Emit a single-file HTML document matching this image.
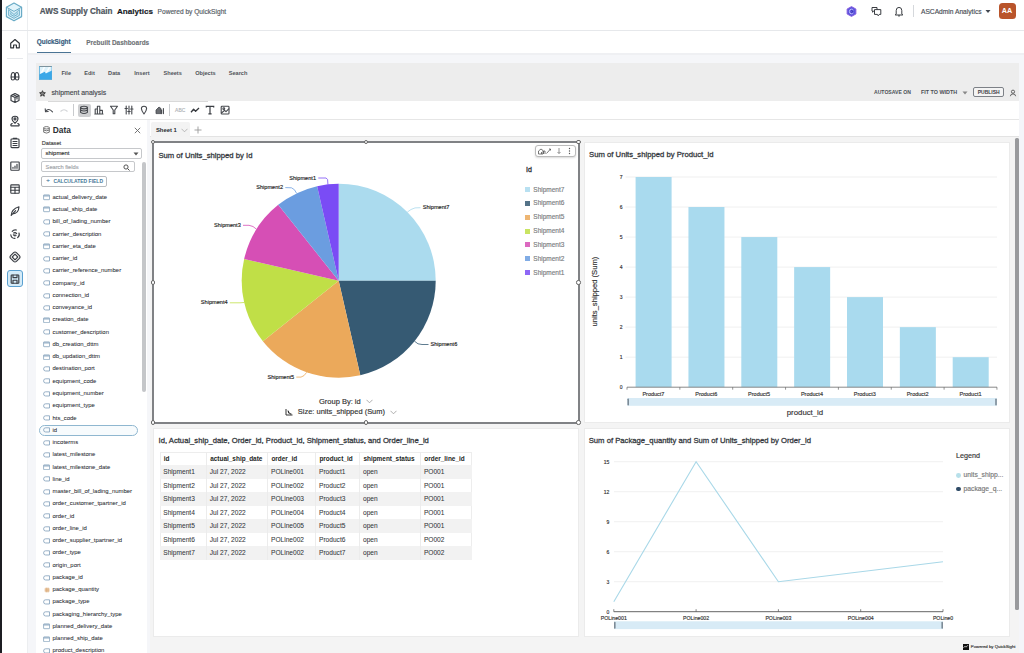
<!DOCTYPE html>
<html><head><meta charset="utf-8"><title>QuickSight</title>
<style>
*{margin:0;padding:0;box-sizing:border-box}
html,body{width:1024px;height:653px;overflow:hidden}
body{position:relative;background:#fff;font-family:"Liberation Sans",sans-serif;color:#16191f}
.a{position:absolute;display:block}
.t{white-space:nowrap}.n{-webkit-text-stroke:0.15px currentColor}
</style></head><body>
<div class="a" style="left:0px;top:0px;width:1024px;height:653px;background:#f5f6f9"></div>
<div class="a" style="left:0px;top:0px;width:2px;height:653px;background:#1c1d22"></div>
<div class="a" style="left:2px;top:0px;width:26px;height:653px;background:#fff;border-right:1px solid #eceef0"></div>
<div class="a" style="left:28px;top:0px;width:996px;height:30px;background:#fff"></div>
<div class="a" style="left:2px;top:30px;width:1022px;height:1px;background:#e6e8eb"></div>
<div class="a" style="left:28px;top:31px;width:996px;height:22px;background:#fff"></div>
<div class="a" style="left:28px;top:53px;width:996px;height:1.6px;background:#eff0f3"></div>
<div class="a t" style="left:39.8px;top:6.61px;font-size:8.15px;line-height:9.78px;font-weight:bold;color:#4e555d;-webkit-text-stroke:0.2px #4e555d">AWS Supply Chain</div>
<div class="a t" style="left:117px;top:6.64px;font-size:8.1px;line-height:9.72px;font-weight:bold;color:#16191f;-webkit-text-stroke:0.15px #16191f">Analytics</div>
<div class="a t n" style="left:157.6px;top:7.84px;font-size:6.6px;line-height:7.92px;font-weight:normal;color:#545b64;">Powered by QuickSight</div>
<svg class="a" style="left:846px;top:5.5px;" width="11" height="11" viewBox="0 0 11 11"><path d="M5.5 0.6 L9.9 3 L9.9 8 L5.5 10.4 L1.1 8 L1.1 3 Z" fill="#5b55dc" stroke="#8a5ee0" stroke-width="0.9" stroke-linejoin="round"/><path d="M7.3 4 Q6.6 3.2 5.5 3.2 Q3.4 3.2 3.4 5.5 Q3.4 7.8 5.5 7.8 Q6.6 7.8 7.3 7" fill="none" stroke="#c9c6ff" stroke-width="0.9"/><path d="M5.5 4.2 L6.5 5.5 L5.5 6.8" fill="none" stroke="#2e2a9a" stroke-width="0.8"/></svg>
<svg class="a" style="left:871px;top:6px;" width="11" height="11" viewBox="0 0 11 11"><path d="M1 1.5 L6 1.5 L6 5 L2.8 5 L1.6 6.2 L1.6 5 L1 5 Z" fill="none" stroke="#2f3338" stroke-width="0.95" stroke-linejoin="round"/><path d="M3.5 3.6 L9.8 3.6 L9.8 8.4 L8.2 8.4 L7.2 9.8 L6.4 8.4 L3.5 8.4 Z" fill="#fff" stroke="#2f3338" stroke-width="0.95" stroke-linejoin="round"/></svg>
<svg class="a" style="left:894px;top:5.5px;" width="10" height="11" viewBox="0 0 10 11"><path d="M2.2 8 L2.2 4.6 Q2.2 1.4 5 1.4 Q7.8 1.4 7.8 4.6 L7.8 8 L8.8 9 L1.2 9 Z" fill="none" stroke="#2f3338" stroke-width="0.95" stroke-linejoin="round"/><path d="M4 9.6 Q5 10.8 6 9.6" fill="none" stroke="#2f3338" stroke-width="0.9"/></svg>
<div class="a" style="left:912.5px;top:5px;width:1px;height:12px;background:#d5d8dc"></div>
<div class="a t n" style="left:921px;top:7.71px;font-size:6.65px;line-height:7.98px;font-weight:normal;color:#4a4f56;">ASCAdmin Analytics</div>
<svg class="a" style="left:985px;top:9px;" width="6" height="5" viewBox="0 0 6 5"><path d="M0.5 1 L5.5 1 L3 4 Z" fill="#414750"/></svg>
<div class="a" style="left:998.5px;top:2.8px;width:17px;height:16.5px;background:#b9542b;border-radius:3.5px"></div>
<div class="a t" style="left:998.5px;top:7.48px;font-size:7.2px;line-height:8.64px;font-weight:bold;color:#fff;width:17px;text-align:center">AA</div>
<svg class="a" style="left:5px;top:2px;" width="18" height="20" viewBox="0 0 18 20"><path d="M9 1 L16.6 5.2 L16.6 14.6 L9 18.8 L1.4 14.6 L1.4 5.2 Z" fill="#e2f4fb" stroke="#69abc6" stroke-width="1.2" stroke-linejoin="round"/><path d="M1.4 5.2 L9 9.4 L16.6 5.2" fill="none" stroke="#69abc6" stroke-width="1"/><path d="M3.6 7.4 L3.6 13.4 L9 16.4 L14.4 13.4 L14.4 7.4 L9 12.6 Z M5.8 10.4 L5.8 12.6 L9 14.3 L12.2 12.6 L12.2 10.4" fill="#cdeaf6" stroke="#69abc6" stroke-width="0.9" stroke-linejoin="round"/></svg>
<svg class="a" style="left:9px;top:38px;" width="12" height="11" viewBox="0 0 12 11"><path d="M1.7 5.3 L6 1.5 L10.3 5.3 L10.3 9.8 L7.4 9.8 L7.4 7 L4.6 7 L4.6 9.8 L1.7 9.8 Z" fill="none" stroke="#2f3338" stroke-width="1.15" stroke-linejoin="round"/></svg>
<div class="a" style="left:7px;top:57.5px;width:16px;height:1px;background:#e6e8eb"></div>
<svg class="a" style="left:9.0px;top:69.8px;" width="12" height="12" viewBox="0 0 12 12"><path d="M2.2 8.2 Q1.8 3 4 2.5 Q5.6 2.3 5.6 5 L5.6 8.2 Q5.6 10 3.9 10 Q2.2 10 2.2 8.2 Z M9.8 8.2 Q10.2 3 8 2.5 Q6.4 2.3 6.4 5 L6.4 8.2 Q6.4 10 8.1 10 Q9.8 10 9.8 8.2 Z" fill="none" stroke="#3a3e44" stroke-width="1.15" stroke-linejoin="round" stroke-linecap="round"/><path d="M2.2 7 L5.6 7 M6.4 7 L9.8 7" fill="none" stroke="#3a3e44" stroke-width="1.15" stroke-linejoin="round" stroke-linecap="round"/></svg>
<svg class="a" style="left:9.0px;top:92.1px;" width="12" height="12" viewBox="0 0 12 12"><path d="M6 1.6 L10 3.6 L10 8.4 L6 10.4 L2 8.4 L2 3.6 Z M2 3.6 L6 5.6 L10 3.6 M6 5.6 L6 10.4" fill="none" stroke="#3a3e44" stroke-width="1.15" stroke-linejoin="round" stroke-linecap="round"/><path d="M4 2.6 L8 4.6 L8 7" fill="none" stroke="#3a3e44" stroke-width="1.15" stroke-linejoin="round" stroke-linecap="round"/></svg>
<svg class="a" style="left:9.0px;top:114.5px;" width="12" height="12" viewBox="0 0 12 12"><path d="M6 8.2 Q3 5.6 3 3.9 Q3 1.2 6 1.2 Q9 1.2 9 3.9 Q9 5.6 6 8.2 Z" fill="none" stroke="#3a3e44" stroke-width="1.15" stroke-linejoin="round" stroke-linecap="round"/><circle cx="6" cy="3.9" r="1" fill="none" stroke="#3a3e44" stroke-width="1.15" stroke-linejoin="round" stroke-linecap="round"/><path d="M3.2 8.6 Q1.2 9.6 2 10.8 L10 10.8 Q10.8 9.6 8.8 8.6" fill="none" stroke="#3a3e44" stroke-width="1.15" stroke-linejoin="round" stroke-linecap="round"/></svg>
<svg class="a" style="left:9.0px;top:137.3px;" width="12" height="12" viewBox="0 0 12 12"><rect x="2" y="2" width="8" height="8.6" rx="0.8" fill="none" stroke="#3a3e44" stroke-width="1.15" stroke-linejoin="round" stroke-linecap="round"/><path d="M4.2 1.4 L7.8 1.4 M4 4.5 L8 4.5 M4 6.5 L8 6.5 M4 8.5 L8 8.5" fill="none" stroke="#3a3e44" stroke-width="1.15" stroke-linejoin="round" stroke-linecap="round"/></svg>
<svg class="a" style="left:9.0px;top:160px;" width="12" height="12" viewBox="0 0 12 12"><rect x="1.8" y="2" width="8.4" height="8.2" rx="0.6" fill="none" stroke="#3a3e44" stroke-width="1.15" stroke-linejoin="round" stroke-linecap="round"/><path d="M4 8.3 L4 7.2 M6 8.3 L6 6 M8 8.3 L8 4.3" fill="none" stroke="#3a3e44" stroke-width="1.15" stroke-linejoin="round" stroke-linecap="round"/></svg>
<svg class="a" style="left:9.0px;top:182.5px;" width="12" height="12" viewBox="0 0 12 12"><rect x="1.8" y="1.8" width="8.4" height="8.4" rx="0.6" fill="none" stroke="#3a3e44" stroke-width="1.15" stroke-linejoin="round" stroke-linecap="round"/><path d="M1.8 4.2 L10.2 4.2 M6 4.2 L6 10.2 M1.8 7.2 L10.2 7.2" fill="none" stroke="#3a3e44" stroke-width="1.15" stroke-linejoin="round" stroke-linecap="round"/></svg>
<svg class="a" style="left:9.0px;top:204.6px;" width="12" height="12" viewBox="0 0 12 12"><path d="M2.2 10.4 Q2.4 4.2 10 1.8 Q9.6 8.6 3.6 9 M2.2 10.4 L6.6 5.6" fill="none" stroke="#3a3e44" stroke-width="1.15" stroke-linejoin="round" stroke-linecap="round"/></svg>
<svg class="a" style="left:9.0px;top:227.8px;" width="12" height="12" viewBox="0 0 12 12"><path d="M3.2 3.4 A4 4 0 0 1 7.4 2 M10 5 A4 4 0 0 1 8.6 9.6 M6 10.4 A4 4 0 0 1 1.8 6.8" fill="none" stroke="#3a3e44" stroke-width="1.15" stroke-linejoin="round" stroke-linecap="round"/><path d="M4.6 5 A2 2 0 0 1 7.6 5.6 M7 7.6 A2 2 0 0 1 4.4 6.8" fill="none" stroke="#3a3e44" stroke-width="1.15" stroke-linejoin="round" stroke-linecap="round"/><circle cx="6" cy="6.2" r="0.6" fill="#3a3e44"/></svg>
<svg class="a" style="left:9.0px;top:250.5px;" width="12" height="12" viewBox="0 0 12 12"><path d="M4.6 1.6 Q6 0.4 7.4 1.6 L10.4 4.6 Q11.6 6 10.4 7.4 L7.4 10.4 Q6 11.6 4.6 10.4 L1.6 7.4 Q0.4 6 1.6 4.6 Z" fill="none" stroke="#3a3e44" stroke-width="1.15" stroke-linejoin="round" stroke-linecap="round"/><path d="M6 3.2 L8.8 6 L6 8.8 L3.2 6 Z" fill="none" stroke="#3a3e44" stroke-width="1.15" stroke-linejoin="round" stroke-linecap="round"/></svg>
<div class="a" style="left:7px;top:270.3px;width:16px;height:17px;background:#d4ebf8;border:1.2px solid #5aa0d0;border-radius:3px"></div>
<svg class="a" style="left:9.0px;top:273px;" width="12" height="12" viewBox="0 0 12 12"><rect x="2.2" y="2" width="7.6" height="8.2" rx="0.5" fill="none" stroke="#3a3e44" stroke-width="1.15" stroke-linejoin="round" stroke-linecap="round"/><path d="M4 2 L4 4.6 L8 4.6 L8 2 M4 10.2 L4 7.2 L8 7.2 L8 10.2" fill="none" stroke="#3a3e44" stroke-width="1.15" stroke-linejoin="round" stroke-linecap="round"/></svg>
<div class="a t" style="left:36.7px;top:38.33px;font-size:6.45px;line-height:7.74px;font-weight:bold;color:#345a7c;-webkit-text-stroke:0.15px #345a7c">QuickSight</div>
<div class="a" style="left:36.5px;top:51.6px;width:34.5px;height:1.4px;background:#4a7495"></div>
<div class="a t" style="left:86.2px;top:38.53px;font-size:6.44px;line-height:7.73px;font-weight:bold;color:#6e7175;-webkit-text-stroke:0.12px #6e7175">Prebuilt Dashboards</div>
<div class="a" style="left:36px;top:63px;width:983px;height:38px;background:#ededed"></div>
<svg class="a" style="left:38.5px;top:66px;" width="13.4" height="13.8" viewBox="0 0 13.4 13.8"><rect x="0" y="0" width="13.4" height="13.8" fill="#dcf2fb"/><path d="M1 8 L4.6 1 L6.4 1 L2.6 8.4 Z M6.6 6.8 L9.8 1 L11.6 1 L8.2 6.6 Z" fill="#fafdff"/><path d="M0 13.8 L0 8.4 L5.8 5.8 L6.8 7.6 L13.4 4.4 L13.4 13.8 Z" fill="#3aa8e8"/><rect x="0.4" y="0.4" width="12.6" height="13" fill="none" stroke="#58addc" stroke-width="0.8"/><path d="M0.8 0.5 L12.6 0.5" stroke="#7f8f96" stroke-width="0.9"/></svg>
<div class="a t" style="left:61.4px;top:69.84px;font-size:5.6px;line-height:6.72px;font-weight:bold;color:#505459;">File</div>
<div class="a t" style="left:84.2px;top:69.84px;font-size:5.6px;line-height:6.72px;font-weight:bold;color:#505459;">Edit</div>
<div class="a t" style="left:108.1px;top:69.84px;font-size:5.6px;line-height:6.72px;font-weight:bold;color:#505459;">Data</div>
<div class="a t" style="left:134.3px;top:69.84px;font-size:5.6px;line-height:6.72px;font-weight:bold;color:#505459;">Insert</div>
<div class="a t" style="left:163.5px;top:69.84px;font-size:5.6px;line-height:6.72px;font-weight:bold;color:#505459;">Sheets</div>
<div class="a t" style="left:195.2px;top:69.84px;font-size:5.6px;line-height:6.72px;font-weight:bold;color:#505459;">Objects</div>
<div class="a t" style="left:228.7px;top:69.84px;font-size:5.6px;line-height:6.72px;font-weight:bold;color:#505459;">Search</div>
<svg class="a" style="left:39.3px;top:89.5px;" width="7" height="7" viewBox="0 0 7 7"><path d="M3.5 0.7 L4.3 2.6 L6.4 2.8 L4.8 4.1 L5.3 6.2 L3.5 5.1 L1.7 6.2 L2.2 4.1 L0.6 2.8 L2.7 2.6 Z" fill="#888" stroke="#333" stroke-width="0.9" stroke-linejoin="round"/></svg>
<div class="a t n" style="left:51.4px;top:89.06px;font-size:6.9px;line-height:8.28px;font-weight:normal;color:#45494e;">shipment analysis</div>
<div class="a t" style="left:874px;top:88.94px;font-size:5.1px;line-height:6.12px;font-weight:bold;color:#4a4f55;">AUTOSAVE ON</div>
<div class="a t" style="left:921px;top:88.76px;font-size:5.4px;line-height:6.48px;font-weight:bold;color:#4a4f55;">FIT TO WIDTH</div>
<svg class="a" style="left:961.5px;top:90.5px;" width="6" height="4" viewBox="0 0 6 4"><path d="M0.5 0.5 L5.5 0.5 L3 3.5 Z" fill="#888"/></svg>
<div class="a" style="left:973.4px;top:87px;width:30.3px;height:10.4px;border:1px solid #7d8187;border-radius:2px;background:#f4f4f4"></div>
<div class="a t" style="left:977.7px;top:89.20px;font-size:5.0px;line-height:6.0px;font-weight:bold;color:#3c4046;">PUBLISH</div>
<svg class="a" style="left:1009px;top:88.5px;" width="8" height="8" viewBox="0 0 8 8"><circle cx="4" cy="2.7" r="1.6" fill="none" stroke="#555" stroke-width="0.9"/><path d="M1.4 7.2 Q1.4 4.9 4 4.9 Q6.6 4.9 6.6 7.2" fill="none" stroke="#555" stroke-width="0.9"/></svg>
<div class="a" style="left:36px;top:101px;width:983px;height:18.5px;background:#fff;border-bottom:1px solid #e6e6e6"></div>
<div class="a" style="left:48px;top:100.5px;width:160px;height:1px;background:#d9d9d9"></div>
<svg class="a" style="left:44px;top:105px;" width="10" height="10" viewBox="0 0 10 10"><path d="M1.5 6.5 Q4.5 2.5 8.5 6.8" fill="none" stroke="#45484d" stroke-width="1.1" stroke-linejoin="round" stroke-linecap="round"/><path d="M1.2 3.8 L1.5 6.8 L4.2 6.5" fill="none" stroke="#45484d" stroke-width="1.1" stroke-linejoin="round" stroke-linecap="round"/></svg>
<svg class="a" style="left:59px;top:105px;" width="10" height="10" viewBox="0 0 10 10"><path d="M1.5 6.5 Q5 3 8.5 6.5" fill="none" stroke="#d3d5d8" stroke-width="1.1"/></svg>
<div class="a" style="left:73.3px;top:104.4px;width:1px;height:11.2px;background:#c9cbce"></div>
<div class="a" style="left:77.6px;top:103.9px;width:13.2px;height:12.7px;background:#cfd0d2;border-radius:2px"></div>
<svg class="a" style="left:79px;top:105px;" width="10" height="10" viewBox="0 0 10 10"><ellipse cx="5" cy="2.6" rx="3.4" ry="1.3" fill="none" stroke="#45484d" stroke-width="1.1" stroke-linejoin="round" stroke-linecap="round"/><path d="M1.6 2.6 L1.6 7.4 Q5 9.6 8.4 7.4 L8.4 2.6 M1.6 5 Q5 7 8.4 5" fill="none" stroke="#45484d" stroke-width="1.1" stroke-linejoin="round" stroke-linecap="round"/></svg>
<svg class="a" style="left:94px;top:105px;" width="10" height="10" viewBox="0 0 10 10"><path d="M1.2 9 L1.2 4 L3.4 4 L3.4 9 M3.4 9 L3.4 1.2 L5.8 1.2 L5.8 9 M5.8 9 L5.8 5.4 L8.4 5.4 L8.4 9 Z M0.8 9 L9 9" fill="none" stroke="#45484d" stroke-width="1.1" stroke-linejoin="round" stroke-linecap="round"/></svg>
<svg class="a" style="left:109.2px;top:105px;" width="10" height="10" viewBox="0 0 10 10"><path d="M1.5 1.3 L8.5 1.3 L5.8 5 L5.8 8.8 L4.2 8.8 L4.2 5 Z" fill="none" stroke="#45484d" stroke-width="1.1" stroke-linejoin="round" stroke-linecap="round"/></svg>
<svg class="a" style="left:124px;top:105px;" width="10" height="10" viewBox="0 0 10 10"><path d="M2.2 1 L2.2 9 M5 1 L5 9 M7.8 1 L7.8 9" fill="none" stroke="#45484d" stroke-width="1.1" stroke-linejoin="round" stroke-linecap="round"/><path d="M1 3.5 L3.4 3.5 M3.8 6.5 L6.2 6.5 M6.6 4 L9 4" fill="none" stroke="#45484d" stroke-width="1.1" stroke-linejoin="round" stroke-linecap="round"/></svg>
<svg class="a" style="left:139.2px;top:105px;" width="10" height="10" viewBox="0 0 10 10"><path d="M5 9 Q2.4 5.6 2.4 3.6 Q2.4 1.2 5 1.2 Q7.6 1.2 7.6 3.6 Q7.6 5.6 5 9 Z" fill="none" stroke="#45484d" stroke-width="1.1" stroke-linejoin="round" stroke-linecap="round"/></svg>
<svg class="a" style="left:155px;top:105px;" width="10" height="10" viewBox="0 0 10 10"><path d="M1 8.6 L1 5 L4 2 L6 3.6 L6 8.6 Z" fill="#6a6d72" stroke="#45484d" stroke-width="0.8"/><path d="M6.6 8.6 L6.6 5 M8.4 8.6 L8.4 3.6" fill="none" stroke="#45484d" stroke-width="1.1" stroke-linejoin="round" stroke-linecap="round"/></svg>
<div class="a" style="left:169.4px;top:104.4px;width:1px;height:11.2px;background:#c9cbce"></div>
<div class="a t n" style="left:175px;top:107.20px;font-size:5px;line-height:6.0px;font-weight:normal;color:#b0b3b7;letter-spacing:0.1px">ABC</div>
<svg class="a" style="left:190px;top:105px;" width="10" height="10" viewBox="0 0 10 10"><path d="M1 7.2 L3.6 4.2 L5.6 6.2 L9 3" fill="none" stroke="#35383d" stroke-width="1.3" stroke-linejoin="round"/></svg>
<svg class="a" style="left:205.2px;top:105px;" width="10" height="10" viewBox="0 0 10 10"><path d="M1.3 2.6 L1.3 1.3 L8.7 1.3 L8.7 2.6 M5 1.3 L5 8.8 M3.4 8.8 L6.6 8.8" fill="none" stroke="#3b3e43" stroke-width="1.2"/></svg>
<svg class="a" style="left:220.2px;top:105px;" width="10" height="10" viewBox="0 0 10 10"><rect x="1.2" y="1.2" width="7.8" height="7.8" rx="0.8" fill="none" stroke="#45484d" stroke-width="1.1" stroke-linejoin="round" stroke-linecap="round"/><circle cx="3.8" cy="3.8" r="0.9" fill="none" stroke="#45484d" stroke-width="1.1" stroke-linejoin="round" stroke-linecap="round"/><path d="M1.5 8 L4.6 5.3 L6 6.6 L8.8 3.9" fill="none" stroke="#45484d" stroke-width="1.1" stroke-linejoin="round" stroke-linecap="round"/></svg>
<div class="a" style="left:36px;top:120px;width:111px;height:533px;background:#fff"></div>
<svg class="a" style="left:42.5px;top:126px;" width="7" height="8" viewBox="0 0 7 8"><ellipse cx="3.5" cy="1.8" rx="2.8" ry="1.2" fill="none" stroke="#555" stroke-width="0.8"/><path d="M0.7 1.8 L0.7 6.2 Q3.5 8 6.3 6.2 L6.3 1.8 M0.7 4 Q3.5 5.6 6.3 4" fill="none" stroke="#555" stroke-width="0.8"/></svg>
<div class="a t" style="left:52.7px;top:124.76px;font-size:8.4px;line-height:10.08px;font-weight:bold;color:#2b2f34;">Data</div>
<svg class="a" style="left:133.5px;top:126.5px;" width="7" height="7" viewBox="0 0 7 7"><path d="M0.8 0.8 L6.2 6.2 M6.2 0.8 L0.8 6.2" stroke="#666" stroke-width="0.9"/></svg>
<div class="a t n" style="left:41.7px;top:139.61px;font-size:5.65px;line-height:6.78px;font-weight:normal;color:#444;">Dataset</div>
<div class="a" style="left:41px;top:147.5px;width:100.6px;height:11.1px;border:1px solid #c6c8cb;border-radius:2px;background:#fff"></div>
<div class="a t n" style="left:45.6px;top:149.96px;font-size:5.9px;line-height:7.08px;font-weight:normal;color:#333;">shipment</div>
<svg class="a" style="left:132.5px;top:151.5px;" width="6" height="4" viewBox="0 0 6 4"><path d="M0.5 0.5 L5.5 0.5 L3 3.5 Z" fill="#555"/></svg>
<div class="a" style="left:41px;top:161.2px;width:93.7px;height:11.1px;border:1px solid #c6c8cb;border-radius:2px;background:#fff"></div>
<div class="a t n" style="left:45.6px;top:164.18px;font-size:5.7px;line-height:6.84px;font-weight:normal;color:#a2a5a9;">Search fields</div>
<svg class="a" style="left:123px;top:163.5px;" width="7" height="7" viewBox="0 0 7 7"><circle cx="3" cy="3" r="2.1" fill="none" stroke="#444" stroke-width="0.9"/><path d="M4.6 4.6 L6.5 6.5" stroke="#444" stroke-width="1"/></svg>
<div class="a" style="left:141.9px;top:161.8px;width:3.9px;height:230px;background:#c4c6c9;border-radius:2px"></div>
<div class="a" style="left:41px;top:175.5px;width:66px;height:11.1px;border:1px solid #b9bcc0;border-radius:2px;background:#fff"></div>
<div class="a t n" style="left:46.3px;top:177.40px;font-size:6px;line-height:7.2px;font-weight:normal;color:#5b8aa8;">+</div>
<div class="a t" style="left:53.4px;top:178.10px;font-size:5.0px;line-height:6.0px;font-weight:bold;color:#477a99;">CALCULATED FIELD</div>
<svg class="a" style="left:43px;top:194.20000000000002px;" width="7.2" height="6.4" viewBox="0 0 7.2 6.4"><rect x="0.6" y="0.9" width="6" height="4.8" rx="0.4" fill="none" stroke="#86a3bd" stroke-width="0.8"/><path d="M0.6 1.9 L6.6 1.9" stroke="#86a3bd" stroke-width="1.1"/></svg>
<div class="a t n" style="left:52.5px;top:193.83px;font-size:5.95px;line-height:7.14px;font-weight:normal;color:#2a2e33;-webkit-text-stroke:0.05px #2a2e33">actual_delivery_date</div>
<svg class="a" style="left:43px;top:206.46px;" width="7.2" height="6.4" viewBox="0 0 7.2 6.4"><rect x="0.6" y="0.9" width="6" height="4.8" rx="0.4" fill="none" stroke="#86a3bd" stroke-width="0.8"/><path d="M0.6 1.9 L6.6 1.9" stroke="#86a3bd" stroke-width="1.1"/></svg>
<div class="a t n" style="left:52.5px;top:206.09px;font-size:5.95px;line-height:7.14px;font-weight:normal;color:#2a2e33;-webkit-text-stroke:0.05px #2a2e33">actual_ship_date</div>
<svg class="a" style="left:43px;top:219.02px;" width="7.2" height="6" viewBox="0 0 7.2 6"><path d="M2.6 0.8 L6.5 0.8 L6.5 5 L2.6 5 Q0.6 5 0.6 2.9 Q0.6 0.8 2.6 0.8 Z" fill="none" stroke="#86a3bd" stroke-width="0.85"/></svg>
<div class="a t n" style="left:52.5px;top:218.35px;font-size:5.95px;line-height:7.14px;font-weight:normal;color:#2a2e33;-webkit-text-stroke:0.05px #2a2e33">bill_of_lading_number</div>
<svg class="a" style="left:43px;top:231.28px;" width="7.2" height="6" viewBox="0 0 7.2 6"><path d="M2.6 0.8 L6.5 0.8 L6.5 5 L2.6 5 Q0.6 5 0.6 2.9 Q0.6 0.8 2.6 0.8 Z" fill="none" stroke="#86a3bd" stroke-width="0.85"/></svg>
<div class="a t n" style="left:52.5px;top:230.61px;font-size:5.95px;line-height:7.14px;font-weight:normal;color:#2a2e33;-webkit-text-stroke:0.05px #2a2e33">carrier_description</div>
<svg class="a" style="left:43px;top:243.24px;" width="7.2" height="6.4" viewBox="0 0 7.2 6.4"><rect x="0.6" y="0.9" width="6" height="4.8" rx="0.4" fill="none" stroke="#86a3bd" stroke-width="0.8"/><path d="M0.6 1.9 L6.6 1.9" stroke="#86a3bd" stroke-width="1.1"/></svg>
<div class="a t n" style="left:52.5px;top:242.87px;font-size:5.95px;line-height:7.14px;font-weight:normal;color:#2a2e33;-webkit-text-stroke:0.05px #2a2e33">carrier_eta_date</div>
<svg class="a" style="left:43px;top:255.79999999999998px;" width="7.2" height="6" viewBox="0 0 7.2 6"><path d="M2.6 0.8 L6.5 0.8 L6.5 5 L2.6 5 Q0.6 5 0.6 2.9 Q0.6 0.8 2.6 0.8 Z" fill="none" stroke="#86a3bd" stroke-width="0.85"/></svg>
<div class="a t n" style="left:52.5px;top:255.13px;font-size:5.95px;line-height:7.14px;font-weight:normal;color:#2a2e33;-webkit-text-stroke:0.05px #2a2e33">carrier_id</div>
<svg class="a" style="left:43px;top:268.06000000000006px;" width="7.2" height="6" viewBox="0 0 7.2 6"><path d="M2.6 0.8 L6.5 0.8 L6.5 5 L2.6 5 Q0.6 5 0.6 2.9 Q0.6 0.8 2.6 0.8 Z" fill="none" stroke="#86a3bd" stroke-width="0.85"/></svg>
<div class="a t n" style="left:52.5px;top:267.39px;font-size:5.95px;line-height:7.14px;font-weight:normal;color:#2a2e33;-webkit-text-stroke:0.05px #2a2e33">carrier_reference_number</div>
<svg class="a" style="left:43px;top:280.32000000000005px;" width="7.2" height="6" viewBox="0 0 7.2 6"><path d="M2.6 0.8 L6.5 0.8 L6.5 5 L2.6 5 Q0.6 5 0.6 2.9 Q0.6 0.8 2.6 0.8 Z" fill="none" stroke="#86a3bd" stroke-width="0.85"/></svg>
<div class="a t n" style="left:52.5px;top:279.65px;font-size:5.95px;line-height:7.14px;font-weight:normal;color:#2a2e33;-webkit-text-stroke:0.05px #2a2e33">company_id</div>
<svg class="a" style="left:43px;top:292.58000000000004px;" width="7.2" height="6" viewBox="0 0 7.2 6"><path d="M2.6 0.8 L6.5 0.8 L6.5 5 L2.6 5 Q0.6 5 0.6 2.9 Q0.6 0.8 2.6 0.8 Z" fill="none" stroke="#86a3bd" stroke-width="0.85"/></svg>
<div class="a t n" style="left:52.5px;top:291.91px;font-size:5.95px;line-height:7.14px;font-weight:normal;color:#2a2e33;-webkit-text-stroke:0.05px #2a2e33">connection_id</div>
<svg class="a" style="left:43px;top:304.84000000000003px;" width="7.2" height="6" viewBox="0 0 7.2 6"><path d="M2.6 0.8 L6.5 0.8 L6.5 5 L2.6 5 Q0.6 5 0.6 2.9 Q0.6 0.8 2.6 0.8 Z" fill="none" stroke="#86a3bd" stroke-width="0.85"/></svg>
<div class="a t n" style="left:52.5px;top:304.17px;font-size:5.95px;line-height:7.14px;font-weight:normal;color:#2a2e33;-webkit-text-stroke:0.05px #2a2e33">conveyance_id</div>
<svg class="a" style="left:43px;top:316.8px;" width="7.2" height="6.4" viewBox="0 0 7.2 6.4"><rect x="0.6" y="0.9" width="6" height="4.8" rx="0.4" fill="none" stroke="#86a3bd" stroke-width="0.8"/><path d="M0.6 1.9 L6.6 1.9" stroke="#86a3bd" stroke-width="1.1"/></svg>
<div class="a t n" style="left:52.5px;top:316.43px;font-size:5.95px;line-height:7.14px;font-weight:normal;color:#2a2e33;-webkit-text-stroke:0.05px #2a2e33">creation_date</div>
<svg class="a" style="left:43px;top:329.36px;" width="7.2" height="6" viewBox="0 0 7.2 6"><path d="M2.6 0.8 L6.5 0.8 L6.5 5 L2.6 5 Q0.6 5 0.6 2.9 Q0.6 0.8 2.6 0.8 Z" fill="none" stroke="#86a3bd" stroke-width="0.85"/></svg>
<div class="a t n" style="left:52.5px;top:328.69px;font-size:5.95px;line-height:7.14px;font-weight:normal;color:#2a2e33;-webkit-text-stroke:0.05px #2a2e33">customer_description</div>
<svg class="a" style="left:43px;top:341.32px;" width="7.2" height="6.4" viewBox="0 0 7.2 6.4"><rect x="0.6" y="0.9" width="6" height="4.8" rx="0.4" fill="none" stroke="#86a3bd" stroke-width="0.8"/><path d="M0.6 1.9 L6.6 1.9" stroke="#86a3bd" stroke-width="1.1"/></svg>
<div class="a t n" style="left:52.5px;top:340.95px;font-size:5.95px;line-height:7.14px;font-weight:normal;color:#2a2e33;-webkit-text-stroke:0.05px #2a2e33">db_creation_dttm</div>
<svg class="a" style="left:43px;top:353.58px;" width="7.2" height="6.4" viewBox="0 0 7.2 6.4"><rect x="0.6" y="0.9" width="6" height="4.8" rx="0.4" fill="none" stroke="#86a3bd" stroke-width="0.8"/><path d="M0.6 1.9 L6.6 1.9" stroke="#86a3bd" stroke-width="1.1"/></svg>
<div class="a t n" style="left:52.5px;top:353.21px;font-size:5.95px;line-height:7.14px;font-weight:normal;color:#2a2e33;-webkit-text-stroke:0.05px #2a2e33">db_updation_dttm</div>
<svg class="a" style="left:43px;top:366.14px;" width="7.2" height="6" viewBox="0 0 7.2 6"><path d="M2.6 0.8 L6.5 0.8 L6.5 5 L2.6 5 Q0.6 5 0.6 2.9 Q0.6 0.8 2.6 0.8 Z" fill="none" stroke="#86a3bd" stroke-width="0.85"/></svg>
<div class="a t n" style="left:52.5px;top:365.47px;font-size:5.95px;line-height:7.14px;font-weight:normal;color:#2a2e33;-webkit-text-stroke:0.05px #2a2e33">destination_port</div>
<svg class="a" style="left:43px;top:378.40000000000003px;" width="7.2" height="6" viewBox="0 0 7.2 6"><path d="M2.6 0.8 L6.5 0.8 L6.5 5 L2.6 5 Q0.6 5 0.6 2.9 Q0.6 0.8 2.6 0.8 Z" fill="none" stroke="#86a3bd" stroke-width="0.85"/></svg>
<div class="a t n" style="left:52.5px;top:377.73px;font-size:5.95px;line-height:7.14px;font-weight:normal;color:#2a2e33;-webkit-text-stroke:0.05px #2a2e33">equipment_code</div>
<svg class="a" style="left:43px;top:390.66px;" width="7.2" height="6" viewBox="0 0 7.2 6"><path d="M2.6 0.8 L6.5 0.8 L6.5 5 L2.6 5 Q0.6 5 0.6 2.9 Q0.6 0.8 2.6 0.8 Z" fill="none" stroke="#86a3bd" stroke-width="0.85"/></svg>
<div class="a t n" style="left:52.5px;top:389.99px;font-size:5.95px;line-height:7.14px;font-weight:normal;color:#2a2e33;-webkit-text-stroke:0.05px #2a2e33">equipment_number</div>
<svg class="a" style="left:43px;top:402.92px;" width="7.2" height="6" viewBox="0 0 7.2 6"><path d="M2.6 0.8 L6.5 0.8 L6.5 5 L2.6 5 Q0.6 5 0.6 2.9 Q0.6 0.8 2.6 0.8 Z" fill="none" stroke="#86a3bd" stroke-width="0.85"/></svg>
<div class="a t n" style="left:52.5px;top:402.25px;font-size:5.95px;line-height:7.14px;font-weight:normal;color:#2a2e33;-webkit-text-stroke:0.05px #2a2e33">equipment_type</div>
<svg class="a" style="left:43px;top:415.18000000000006px;" width="7.2" height="6" viewBox="0 0 7.2 6"><path d="M2.6 0.8 L6.5 0.8 L6.5 5 L2.6 5 Q0.6 5 0.6 2.9 Q0.6 0.8 2.6 0.8 Z" fill="none" stroke="#86a3bd" stroke-width="0.85"/></svg>
<div class="a t n" style="left:52.5px;top:414.51px;font-size:5.95px;line-height:7.14px;font-weight:normal;color:#2a2e33;-webkit-text-stroke:0.05px #2a2e33">hts_code</div>
<div class="a" style="left:38.5px;top:424.54px;width:99.5px;height:11.6px;border:1px solid #8fb7d0;border-radius:6px;background:#f7fbfd"></div>
<svg class="a" style="left:43px;top:427.44000000000005px;" width="7.2" height="6" viewBox="0 0 7.2 6"><path d="M2.6 0.8 L6.5 0.8 L6.5 5 L2.6 5 Q0.6 5 0.6 2.9 Q0.6 0.8 2.6 0.8 Z" fill="none" stroke="#86a3bd" stroke-width="0.85"/></svg>
<div class="a t n" style="left:52.5px;top:426.77px;font-size:5.95px;line-height:7.14px;font-weight:normal;color:#2a2e33;-webkit-text-stroke:0.05px #2a2e33">id</div>
<svg class="a" style="left:43px;top:439.70000000000005px;" width="7.2" height="6" viewBox="0 0 7.2 6"><path d="M2.6 0.8 L6.5 0.8 L6.5 5 L2.6 5 Q0.6 5 0.6 2.9 Q0.6 0.8 2.6 0.8 Z" fill="none" stroke="#86a3bd" stroke-width="0.85"/></svg>
<div class="a t n" style="left:52.5px;top:439.03px;font-size:5.95px;line-height:7.14px;font-weight:normal;color:#2a2e33;-webkit-text-stroke:0.05px #2a2e33">incoterms</div>
<svg class="a" style="left:43px;top:451.96000000000004px;" width="7.2" height="6" viewBox="0 0 7.2 6"><path d="M2.6 0.8 L6.5 0.8 L6.5 5 L2.6 5 Q0.6 5 0.6 2.9 Q0.6 0.8 2.6 0.8 Z" fill="none" stroke="#86a3bd" stroke-width="0.85"/></svg>
<div class="a t n" style="left:52.5px;top:451.29px;font-size:5.95px;line-height:7.14px;font-weight:normal;color:#2a2e33;-webkit-text-stroke:0.05px #2a2e33">latest_milestone</div>
<svg class="a" style="left:43px;top:463.92px;" width="7.2" height="6.4" viewBox="0 0 7.2 6.4"><rect x="0.6" y="0.9" width="6" height="4.8" rx="0.4" fill="none" stroke="#86a3bd" stroke-width="0.8"/><path d="M0.6 1.9 L6.6 1.9" stroke="#86a3bd" stroke-width="1.1"/></svg>
<div class="a t n" style="left:52.5px;top:463.55px;font-size:5.95px;line-height:7.14px;font-weight:normal;color:#2a2e33;-webkit-text-stroke:0.05px #2a2e33">latest_milestone_date</div>
<svg class="a" style="left:43px;top:476.48px;" width="7.2" height="6" viewBox="0 0 7.2 6"><path d="M2.6 0.8 L6.5 0.8 L6.5 5 L2.6 5 Q0.6 5 0.6 2.9 Q0.6 0.8 2.6 0.8 Z" fill="none" stroke="#86a3bd" stroke-width="0.85"/></svg>
<div class="a t n" style="left:52.5px;top:475.81px;font-size:5.95px;line-height:7.14px;font-weight:normal;color:#2a2e33;-webkit-text-stroke:0.05px #2a2e33">line_id</div>
<svg class="a" style="left:43px;top:488.74px;" width="7.2" height="6" viewBox="0 0 7.2 6"><path d="M2.6 0.8 L6.5 0.8 L6.5 5 L2.6 5 Q0.6 5 0.6 2.9 Q0.6 0.8 2.6 0.8 Z" fill="none" stroke="#86a3bd" stroke-width="0.85"/></svg>
<div class="a t n" style="left:52.5px;top:488.07px;font-size:5.95px;line-height:7.14px;font-weight:normal;color:#2a2e33;-webkit-text-stroke:0.05px #2a2e33">master_bill_of_lading_number</div>
<svg class="a" style="left:43px;top:501.0px;" width="7.2" height="6" viewBox="0 0 7.2 6"><path d="M2.6 0.8 L6.5 0.8 L6.5 5 L2.6 5 Q0.6 5 0.6 2.9 Q0.6 0.8 2.6 0.8 Z" fill="none" stroke="#86a3bd" stroke-width="0.85"/></svg>
<div class="a t n" style="left:52.5px;top:500.33px;font-size:5.95px;line-height:7.14px;font-weight:normal;color:#2a2e33;-webkit-text-stroke:0.05px #2a2e33">order_customer_tpartner_id</div>
<svg class="a" style="left:43px;top:513.26px;" width="7.2" height="6" viewBox="0 0 7.2 6"><path d="M2.6 0.8 L6.5 0.8 L6.5 5 L2.6 5 Q0.6 5 0.6 2.9 Q0.6 0.8 2.6 0.8 Z" fill="none" stroke="#86a3bd" stroke-width="0.85"/></svg>
<div class="a t n" style="left:52.5px;top:512.59px;font-size:5.95px;line-height:7.14px;font-weight:normal;color:#2a2e33;-webkit-text-stroke:0.05px #2a2e33">order_id</div>
<svg class="a" style="left:43px;top:525.52px;" width="7.2" height="6" viewBox="0 0 7.2 6"><path d="M2.6 0.8 L6.5 0.8 L6.5 5 L2.6 5 Q0.6 5 0.6 2.9 Q0.6 0.8 2.6 0.8 Z" fill="none" stroke="#86a3bd" stroke-width="0.85"/></svg>
<div class="a t n" style="left:52.5px;top:524.85px;font-size:5.95px;line-height:7.14px;font-weight:normal;color:#2a2e33;-webkit-text-stroke:0.05px #2a2e33">order_line_id</div>
<svg class="a" style="left:43px;top:537.78px;" width="7.2" height="6" viewBox="0 0 7.2 6"><path d="M2.6 0.8 L6.5 0.8 L6.5 5 L2.6 5 Q0.6 5 0.6 2.9 Q0.6 0.8 2.6 0.8 Z" fill="none" stroke="#86a3bd" stroke-width="0.85"/></svg>
<div class="a t n" style="left:52.5px;top:537.11px;font-size:5.95px;line-height:7.14px;font-weight:normal;color:#2a2e33;-webkit-text-stroke:0.05px #2a2e33">order_supplier_tpartner_id</div>
<svg class="a" style="left:43px;top:550.0400000000001px;" width="7.2" height="6" viewBox="0 0 7.2 6"><path d="M2.6 0.8 L6.5 0.8 L6.5 5 L2.6 5 Q0.6 5 0.6 2.9 Q0.6 0.8 2.6 0.8 Z" fill="none" stroke="#86a3bd" stroke-width="0.85"/></svg>
<div class="a t n" style="left:52.5px;top:549.37px;font-size:5.95px;line-height:7.14px;font-weight:normal;color:#2a2e33;-webkit-text-stroke:0.05px #2a2e33">order_type</div>
<svg class="a" style="left:43px;top:562.3000000000001px;" width="7.2" height="6" viewBox="0 0 7.2 6"><path d="M2.6 0.8 L6.5 0.8 L6.5 5 L2.6 5 Q0.6 5 0.6 2.9 Q0.6 0.8 2.6 0.8 Z" fill="none" stroke="#86a3bd" stroke-width="0.85"/></svg>
<div class="a t n" style="left:52.5px;top:561.63px;font-size:5.95px;line-height:7.14px;font-weight:normal;color:#2a2e33;-webkit-text-stroke:0.05px #2a2e33">origin_port</div>
<svg class="a" style="left:43px;top:574.5600000000001px;" width="7.2" height="6" viewBox="0 0 7.2 6"><path d="M2.6 0.8 L6.5 0.8 L6.5 5 L2.6 5 Q0.6 5 0.6 2.9 Q0.6 0.8 2.6 0.8 Z" fill="none" stroke="#86a3bd" stroke-width="0.85"/></svg>
<div class="a t n" style="left:52.5px;top:573.89px;font-size:5.95px;line-height:7.14px;font-weight:normal;color:#2a2e33;-webkit-text-stroke:0.05px #2a2e33">package_id</div>
<svg class="a" style="left:43.5px;top:586.72px;" width="6" height="6" viewBox="0 0 6 6"><path d="M2.2 0.6 L2.2 5.4 M4 0.6 L4 5.4 M0.6 2.1 L5.6 2.1 M0.6 3.9 L5.6 3.9" stroke="#d9a36a" stroke-width="0.9"/></svg>
<div class="a t n" style="left:52.5px;top:586.15px;font-size:5.95px;line-height:7.14px;font-weight:normal;color:#2a2e33;-webkit-text-stroke:0.05px #2a2e33">package_quantity</div>
<svg class="a" style="left:43px;top:599.08px;" width="7.2" height="6" viewBox="0 0 7.2 6"><path d="M2.6 0.8 L6.5 0.8 L6.5 5 L2.6 5 Q0.6 5 0.6 2.9 Q0.6 0.8 2.6 0.8 Z" fill="none" stroke="#86a3bd" stroke-width="0.85"/></svg>
<div class="a t n" style="left:52.5px;top:598.41px;font-size:5.95px;line-height:7.14px;font-weight:normal;color:#2a2e33;-webkit-text-stroke:0.05px #2a2e33">package_type</div>
<svg class="a" style="left:43px;top:611.34px;" width="7.2" height="6" viewBox="0 0 7.2 6"><path d="M2.6 0.8 L6.5 0.8 L6.5 5 L2.6 5 Q0.6 5 0.6 2.9 Q0.6 0.8 2.6 0.8 Z" fill="none" stroke="#86a3bd" stroke-width="0.85"/></svg>
<div class="a t n" style="left:52.5px;top:610.67px;font-size:5.95px;line-height:7.14px;font-weight:normal;color:#2a2e33;-webkit-text-stroke:0.05px #2a2e33">packaging_hierarchy_type</div>
<svg class="a" style="left:43px;top:623.3px;" width="7.2" height="6.4" viewBox="0 0 7.2 6.4"><rect x="0.6" y="0.9" width="6" height="4.8" rx="0.4" fill="none" stroke="#86a3bd" stroke-width="0.8"/><path d="M0.6 1.9 L6.6 1.9" stroke="#86a3bd" stroke-width="1.1"/></svg>
<div class="a t n" style="left:52.5px;top:622.93px;font-size:5.95px;line-height:7.14px;font-weight:normal;color:#2a2e33;-webkit-text-stroke:0.05px #2a2e33">planned_delivery_date</div>
<svg class="a" style="left:43px;top:635.56px;" width="7.2" height="6.4" viewBox="0 0 7.2 6.4"><rect x="0.6" y="0.9" width="6" height="4.8" rx="0.4" fill="none" stroke="#86a3bd" stroke-width="0.8"/><path d="M0.6 1.9 L6.6 1.9" stroke="#86a3bd" stroke-width="1.1"/></svg>
<div class="a t n" style="left:52.5px;top:635.19px;font-size:5.95px;line-height:7.14px;font-weight:normal;color:#2a2e33;-webkit-text-stroke:0.05px #2a2e33">planned_ship_date</div>
<svg class="a" style="left:43px;top:648.12px;" width="7.2" height="6" viewBox="0 0 7.2 6"><path d="M2.6 0.8 L6.5 0.8 L6.5 5 L2.6 5 Q0.6 5 0.6 2.9 Q0.6 0.8 2.6 0.8 Z" fill="none" stroke="#86a3bd" stroke-width="0.85"/></svg>
<div class="a t n" style="left:52.5px;top:647.45px;font-size:5.95px;line-height:7.14px;font-weight:normal;color:#2a2e33;-webkit-text-stroke:0.05px #2a2e33">product_description</div>
<div class="a" style="left:150px;top:120px;width:869px;height:17px;background:#fff;border-bottom:1px solid #e3e3e3"></div>
<div class="a" style="left:150px;top:137px;width:869px;height:516px;background:#f4f4f4"></div>
<div class="a" style="left:150.5px;top:122px;width:39px;height:15px;background:#f3f3f3;border-radius:2px 2px 0 0"></div>
<div class="a t" style="left:155.9px;top:126.66px;font-size:5.9px;line-height:7.08px;font-weight:bold;color:#2a2d31;">Sheet 1</div>
<svg class="a" style="left:181px;top:127.5px;" width="7" height="5" viewBox="0 0 7 5"><path d="M0.5 0.8 L3.5 3.8 L6.5 0.8" fill="none" stroke="#aaa" stroke-width="0.8"/></svg>
<svg class="a" style="left:193.5px;top:125.5px;" width="8" height="8" viewBox="0 0 8 8"><path d="M4 0.5 L4 7.5 M0.5 4 L7.5 4" stroke="#999" stroke-width="0.9"/></svg>
<div class="a" style="left:1019px;top:120px;width:5px;height:533px;background:#f4f5f9"></div>
<div class="a" style="left:1015.4px;top:138px;width:3.2px;height:471.5px;background:#999a9d;border-radius:1.5px"></div>
<div class="a" style="left:153px;top:142px;width:426px;height:281px;background:#fff"></div>
<div class="a" style="left:584px;top:142px;width:425.5px;height:280.5px;background:#fff;border:1px solid #ebebeb"></div>
<div class="a" style="left:153px;top:427.6px;width:426px;height:209px;background:#fff;border:1px solid #ebebeb"></div>
<div class="a" style="left:584px;top:427.6px;width:425.5px;height:209px;background:#fff;border:1px solid #ebebeb"></div>
<div class="a t n" style="left:158.4px;top:150.78px;font-size:7.7px;line-height:9.24px;font-weight:normal;color:#33373c;-webkit-text-stroke:0.28px #33373c">Sum of Units_shipped by Id</div>
<svg class="a" style="left:153px;top:142px;" width="426" height="281" viewBox="0 0 426 281"><g transform="translate(-153,-142)"><path d="M338.7 280.7 L338.70 183.70 A97 97 0 0 1 435.70 280.70 Z" fill="#abdbee"/><path d="M338.7 280.7 L435.70 280.70 A97 97 0 0 1 360.28 375.27 Z" fill="#365a73"/><path d="M338.7 280.7 L360.28 375.27 A97 97 0 0 1 262.86 341.18 Z" fill="#eba95b"/><path d="M338.7 280.7 L262.86 341.18 A97 97 0 0 1 244.13 259.12 Z" fill="#c0df47"/><path d="M338.7 280.7 L244.13 259.12 A97 97 0 0 1 278.22 204.86 Z" fill="#d64fb5"/><path d="M338.7 280.7 L278.22 204.86 A97 97 0 0 1 317.12 186.13 Z" fill="#6b9de0"/><path d="M338.7 280.7 L317.12 186.13 A97 97 0 0 1 338.70 183.70 Z" fill="#7a4cf5"/><polyline points="407.3,212.1 411,209.5 415,207.9 420.5,207.7" fill="none" stroke="#abdbee" stroke-width="0.8" stroke-linejoin="round"/><polyline points="414.5,341.2 418,343.8 422,344.5 428.5,344.5" fill="none" stroke="#365a73" stroke-width="0.8" stroke-linejoin="round"/><polyline points="306.7,372.3 304,375.6 301,377.1 296.3,377.1" fill="none" stroke="#eba95b" stroke-width="0.8" stroke-linejoin="round"/><polyline points="244.1,302.5 240,302.8 229.8,302.8" fill="none" stroke="#c0df47" stroke-width="0.8" stroke-linejoin="round"/><polyline points="256.5,229.2 253,226.5 249,225.3 243,225.3" fill="none" stroke="#d64fb5" stroke-width="0.8" stroke-linejoin="round"/><polyline points="296.6,193.3 294.5,189.8 291.5,187.8 285.3,187.6" fill="none" stroke="#6b9de0" stroke-width="0.8" stroke-linejoin="round"/><polyline points="327.9,184.3 327.6,179.5 326,178 318.3,178" fill="none" stroke="#7a4cf5" stroke-width="0.8" stroke-linejoin="round"/></g></svg>
<div class="a t n" style="left:422.7px;top:204.34px;font-size:5.6px;line-height:6.72px;font-weight:normal;color:#222;">Shipment7</div>
<div class="a t n" style="left:430.5px;top:341.14px;font-size:5.6px;line-height:6.72px;font-weight:normal;color:#222;">Shipment6</div>
<div class="a t n" style="left:264.2px;top:373.74px;font-size:5.6px;line-height:6.72px;font-weight:normal;color:#222;width:30px;text-align:right">Shipment5</div>
<div class="a t n" style="left:197.6px;top:299.44px;font-size:5.6px;line-height:6.72px;font-weight:normal;color:#222;width:30px;text-align:right">Shipment4</div>
<div class="a t n" style="left:210.8px;top:221.94px;font-size:5.6px;line-height:6.72px;font-weight:normal;color:#222;width:30px;text-align:right">Shipment3</div>
<div class="a t n" style="left:253px;top:184.24px;font-size:5.6px;line-height:6.72px;font-weight:normal;color:#222;width:30px;text-align:right">Shipment2</div>
<div class="a t n" style="left:286px;top:174.64px;font-size:5.6px;line-height:6.72px;font-weight:normal;color:#222;width:30px;text-align:right">Shipment1</div>
<div class="a t n" style="left:526px;top:166.40px;font-size:7px;line-height:8.4px;font-weight:normal;color:#2e3135;-webkit-text-stroke:0.3px #2e3135">Id</div>
<div class="a" style="left:525.3px;top:187.0px;width:5px;height:5px;background:#abdbee;opacity:0.85"></div>
<div class="a t n" style="left:533.3px;top:185.60px;font-size:6.5px;line-height:7.8px;font-weight:normal;color:#7a7c80;">Shipment7</div>
<div class="a" style="left:525.3px;top:200.85px;width:5px;height:5px;background:#365a73;opacity:0.85"></div>
<div class="a t n" style="left:533.3px;top:199.45px;font-size:6.5px;line-height:7.8px;font-weight:normal;color:#7a7c80;">Shipment6</div>
<div class="a" style="left:525.3px;top:214.7px;width:5px;height:5px;background:#eba95b;opacity:0.85"></div>
<div class="a t n" style="left:533.3px;top:213.30px;font-size:6.5px;line-height:7.8px;font-weight:normal;color:#7a7c80;">Shipment5</div>
<div class="a" style="left:525.3px;top:228.55px;width:5px;height:5px;background:#c0df47;opacity:0.85"></div>
<div class="a t n" style="left:533.3px;top:227.15px;font-size:6.5px;line-height:7.8px;font-weight:normal;color:#7a7c80;">Shipment4</div>
<div class="a" style="left:525.3px;top:242.4px;width:5px;height:5px;background:#d64fb5;opacity:0.85"></div>
<div class="a t n" style="left:533.3px;top:241.00px;font-size:6.5px;line-height:7.8px;font-weight:normal;color:#7a7c80;">Shipment3</div>
<div class="a" style="left:525.3px;top:256.25px;width:5px;height:5px;background:#6b9de0;opacity:0.85"></div>
<div class="a t n" style="left:533.3px;top:254.85px;font-size:6.5px;line-height:7.8px;font-weight:normal;color:#7a7c80;">Shipment2</div>
<div class="a" style="left:525.3px;top:270.1px;width:5px;height:5px;background:#7a4cf5;opacity:0.85"></div>
<div class="a t n" style="left:533.3px;top:268.70px;font-size:6.5px;line-height:7.8px;font-weight:normal;color:#7a7c80;">Shipment1</div>
<div class="a" style="left:534.7px;top:145.3px;width:41.3px;height:11.6px;background:#fff;border:1px solid #bbb;border-radius:3px;box-shadow:0 1px 2px rgba(0,0,0,0.15)"></div>
<svg class="a" style="left:536px;top:146px;" width="40" height="10" viewBox="0 0 40 10"><path d="M2.5 8 L2.5 5 L5 3 L7 4.5 L7 8 Z M5.5 8 L5.5 6 M7.5 8 L7.5 5 L9 5 L9 8" fill="none" stroke="#555" stroke-width="0.8"/><path d="M10.5 7.5 L14.5 3 M13 3 L14.5 3 L14.5 4.5" fill="none" stroke="#555" stroke-width="0.8"/><path d="M23 2 L23 7.5 M21.5 6 L23 7.5 L24.5 6" fill="none" stroke="#777" stroke-width="0.8"/><circle cx="33.5" cy="2.5" r="0.7" fill="#555"/><circle cx="33.5" cy="5" r="0.7" fill="#555"/><circle cx="33.5" cy="7.5" r="0.7" fill="#555"/></svg>
<div class="a t n" style="left:319px;top:396.60px;font-size:7.5px;line-height:9.0px;font-weight:normal;color:#333;">Group By: id</div>
<svg class="a" style="left:366px;top:398.5px;" width="7" height="5" viewBox="0 0 7 5"><path d="M0.5 0.8 L3.5 3.8 L6.5 0.8" fill="none" stroke="#999" stroke-width="0.8"/></svg>
<svg class="a" style="left:284.5px;top:408px;" width="8" height="8" viewBox="0 0 8 8"><path d="M1 1 L1 7 L7.5 7 M2.5 3 L3.5 3 L3.5 5 L5 5 L5 6 L6.5 6" fill="none" stroke="#333" stroke-width="1"/></svg>
<div class="a t n" style="left:297.8px;top:407.52px;font-size:7.47px;line-height:8.96px;font-weight:normal;color:#333;">Size: units_shipped (Sum)</div>
<svg class="a" style="left:389.5px;top:409.5px;" width="7" height="5" viewBox="0 0 7 5"><path d="M0.5 0.8 L3.5 3.8 L6.5 0.8" fill="none" stroke="#999" stroke-width="0.8"/></svg>
<div class="a" style="left:152px;top:141px;width:428px;height:283px;border:2px solid #808285"></div>
<div class="a" style="left:150.8px;top:139.8px;width:4.4px;height:4.4px;background:#fff;border:1px solid #666;border-radius:50%"></div>
<div class="a" style="left:363.8px;top:139.8px;width:4.4px;height:4.4px;background:#fff;border:1px solid #666;border-radius:50%"></div>
<div class="a" style="left:576.3px;top:139.8px;width:4.4px;height:4.4px;background:#fff;border:1px solid #666;border-radius:50%"></div>
<div class="a" style="left:150.8px;top:280.3px;width:4.4px;height:4.4px;background:#fff;border:1px solid #666;border-radius:50%"></div>
<div class="a" style="left:576.3px;top:280.3px;width:4.4px;height:4.4px;background:#fff;border:1px solid #666;border-radius:50%"></div>
<div class="a" style="left:150.8px;top:420.3px;width:4.4px;height:4.4px;background:#fff;border:1px solid #666;border-radius:50%"></div>
<div class="a" style="left:363.8px;top:420.3px;width:4.4px;height:4.4px;background:#fff;border:1px solid #666;border-radius:50%"></div>
<div class="a" style="left:576.3px;top:420.3px;width:4.4px;height:4.4px;background:#fff;border:1px solid #666;border-radius:50%"></div>
<div class="a t n" style="left:589.1px;top:150.48px;font-size:7.7px;line-height:9.24px;font-weight:normal;color:#33373c;-webkit-text-stroke:0.28px #33373c">Sum of Units_shipped by Product_id</div>
<svg class="a" style="left:584px;top:142px;" width="436" height="290" viewBox="0 0 436 290"><g transform="translate(-584,-142)"><line x1="625.5" y1="357.17" x2="997" y2="357.17" stroke="#ececec" stroke-width="0.8"/><line x1="625.5" y1="327.14" x2="997" y2="327.14" stroke="#ececec" stroke-width="0.8"/><line x1="625.5" y1="297.11" x2="997" y2="297.11" stroke="#ececec" stroke-width="0.8"/><line x1="625.5" y1="267.08" x2="997" y2="267.08" stroke="#ececec" stroke-width="0.8"/><line x1="625.5" y1="237.05" x2="997" y2="237.05" stroke="#ececec" stroke-width="0.8"/><line x1="625.5" y1="207.02" x2="997" y2="207.02" stroke="#ececec" stroke-width="0.8"/><line x1="625.5" y1="176.99" x2="997" y2="176.99" stroke="#ececec" stroke-width="0.8"/><rect x="635.60" y="176.99" width="36" height="210.21" fill="#a9daee"/><rect x="688.45" y="207.02" width="36" height="180.18" fill="#a9daee"/><rect x="741.30" y="237.05" width="36" height="150.15" fill="#a9daee"/><rect x="794.15" y="267.08" width="36" height="120.12" fill="#a9daee"/><rect x="847.00" y="297.11" width="36" height="90.09" fill="#a9daee"/><rect x="899.85" y="327.14" width="36" height="60.06" fill="#a9daee"/><rect x="952.70" y="357.17" width="36" height="30.03" fill="#a9daee"/><line x1="627" y1="387.2" x2="997" y2="387.2" stroke="#7a7a7a" stroke-width="0.9"/><line x1="627.00" y1="387.2" x2="627.00" y2="389.7" stroke="#666" stroke-width="0.7"/><line x1="679.85" y1="387.2" x2="679.85" y2="389.7" stroke="#666" stroke-width="0.7"/><line x1="732.70" y1="387.2" x2="732.70" y2="389.7" stroke="#666" stroke-width="0.7"/><line x1="785.55" y1="387.2" x2="785.55" y2="389.7" stroke="#666" stroke-width="0.7"/><line x1="838.40" y1="387.2" x2="838.40" y2="389.7" stroke="#666" stroke-width="0.7"/><line x1="891.25" y1="387.2" x2="891.25" y2="389.7" stroke="#666" stroke-width="0.7"/><line x1="944.10" y1="387.2" x2="944.10" y2="389.7" stroke="#666" stroke-width="0.7"/><line x1="996.95" y1="387.2" x2="996.95" y2="389.7" stroke="#666" stroke-width="0.7"/><rect x="627.4" y="398" width="369.5" height="7.8" fill="#d8ebf6"/><rect x="627.4" y="398.5" width="1.6" height="7" rx="0.8" fill="#7c8a96"/><rect x="995.2" y="398.5" width="1.6" height="7" rx="0.8" fill="#7c8a96"/></g></svg>
<div class="a t n" style="left:618.5px;top:384.20px;font-size:5px;line-height:6.0px;font-weight:normal;color:#333;width:4px;text-align:right">0</div>
<div class="a t n" style="left:618.5px;top:354.17px;font-size:5px;line-height:6.0px;font-weight:normal;color:#333;width:4px;text-align:right">1</div>
<div class="a t n" style="left:618.5px;top:324.14px;font-size:5px;line-height:6.0px;font-weight:normal;color:#333;width:4px;text-align:right">2</div>
<div class="a t n" style="left:618.5px;top:294.11px;font-size:5px;line-height:6.0px;font-weight:normal;color:#333;width:4px;text-align:right">3</div>
<div class="a t n" style="left:618.5px;top:264.08px;font-size:5px;line-height:6.0px;font-weight:normal;color:#333;width:4px;text-align:right">4</div>
<div class="a t n" style="left:618.5px;top:234.05px;font-size:5px;line-height:6.0px;font-weight:normal;color:#333;width:4px;text-align:right">5</div>
<div class="a t n" style="left:618.5px;top:204.02px;font-size:5px;line-height:6.0px;font-weight:normal;color:#333;width:4px;text-align:right">6</div>
<div class="a t n" style="left:618.5px;top:173.99px;font-size:5px;line-height:6.0px;font-weight:normal;color:#333;width:4px;text-align:right">7</div>
<div class="a t n" style="left:633.4px;top:390.90px;font-size:5.5px;line-height:6.6px;font-weight:normal;color:#333;width:40px;text-align:center">Product7</div>
<div class="a t n" style="left:686.25px;top:390.90px;font-size:5.5px;line-height:6.6px;font-weight:normal;color:#333;width:40px;text-align:center">Product6</div>
<div class="a t n" style="left:739.1px;top:390.90px;font-size:5.5px;line-height:6.6px;font-weight:normal;color:#333;width:40px;text-align:center">Product5</div>
<div class="a t n" style="left:791.9499999999999px;top:390.90px;font-size:5.5px;line-height:6.6px;font-weight:normal;color:#333;width:40px;text-align:center">Product4</div>
<div class="a t n" style="left:844.8px;top:390.90px;font-size:5.5px;line-height:6.6px;font-weight:normal;color:#333;width:40px;text-align:center">Product3</div>
<div class="a t n" style="left:897.65px;top:390.90px;font-size:5.5px;line-height:6.6px;font-weight:normal;color:#333;width:40px;text-align:center">Product2</div>
<div class="a t n" style="left:950.5px;top:390.90px;font-size:5.5px;line-height:6.6px;font-weight:normal;color:#333;width:40px;text-align:center">Product1</div>
<div class="a t n" style="left:750px;top:407.52px;font-size:7.8px;line-height:9.36px;font-weight:normal;color:#333;width:110px;text-align:center">product_id</div>
<div class="a t n" style="left:544.8px;top:287.14px;font-size:7.6px;line-height:9.12px;font-weight:normal;color:#333;width:100px;text-align:center;transform:rotate(-90deg);transform-origin:50px 50%">units_shipped (Sum)</div>
<div class="a t n" style="left:158.6px;top:436.30px;font-size:7.67px;line-height:9.2px;font-weight:normal;color:#33373c;-webkit-text-stroke:0.28px #33373c">Id, Actual_ship_date, Order_id, Product_id, Shipment_status, and Order_line_id</div>
<div class="a" style="left:159.7px;top:451.6px;width:312.3px;height:108.0px;background:#fff;border:1px solid #ededed"></div>
<div class="a" style="left:159.7px;top:465.1px;width:312.3px;height:13.5px;background:#f2f2f2"></div>
<div class="a" style="left:159.7px;top:492.1px;width:312.3px;height:13.5px;background:#f2f2f2"></div>
<div class="a" style="left:159.7px;top:519.1px;width:312.3px;height:13.5px;background:#f2f2f2"></div>
<div class="a" style="left:159.7px;top:546.1px;width:312.3px;height:13.5px;background:#f2f2f2"></div>
<div class="a" style="left:206.2px;top:451.6px;width:1px;height:108.0px;background:#ececec"></div>
<div class="a" style="left:267.4px;top:451.6px;width:1px;height:108.0px;background:#ececec"></div>
<div class="a" style="left:315.4px;top:451.6px;width:1px;height:108.0px;background:#ececec"></div>
<div class="a" style="left:359.4px;top:451.6px;width:1px;height:108.0px;background:#ececec"></div>
<div class="a" style="left:420.3px;top:451.6px;width:1px;height:108.0px;background:#ececec"></div>
<div class="a t" style="left:163.7px;top:454.98px;font-size:6.45px;line-height:7.74px;font-weight:bold;color:#1c1f23;">id</div>
<div class="a t" style="left:210.2px;top:454.98px;font-size:6.45px;line-height:7.74px;font-weight:bold;color:#1c1f23;">actual_ship_date</div>
<div class="a t" style="left:271.4px;top:454.98px;font-size:6.45px;line-height:7.74px;font-weight:bold;color:#1c1f23;">order_id</div>
<div class="a t" style="left:319.4px;top:454.98px;font-size:6.45px;line-height:7.74px;font-weight:bold;color:#1c1f23;">product_id</div>
<div class="a t" style="left:363.4px;top:454.98px;font-size:6.45px;line-height:7.74px;font-weight:bold;color:#1c1f23;">shipment_status</div>
<div class="a t" style="left:424.3px;top:454.98px;font-size:6.45px;line-height:7.74px;font-weight:bold;color:#1c1f23;">order_line_id</div>
<div class="a t n" style="left:163.29999999999998px;top:468.39px;font-size:6.6px;line-height:7.92px;font-weight:normal;color:#33363a;-webkit-text-stroke:0.05px #33363a">Shipment1</div>
<div class="a t n" style="left:209.79999999999998px;top:468.39px;font-size:6.6px;line-height:7.92px;font-weight:normal;color:#33363a;-webkit-text-stroke:0.05px #33363a">Jul 27, 2022</div>
<div class="a t n" style="left:271.0px;top:468.39px;font-size:6.6px;line-height:7.92px;font-weight:normal;color:#33363a;-webkit-text-stroke:0.05px #33363a">POLine001</div>
<div class="a t n" style="left:319.0px;top:468.39px;font-size:6.6px;line-height:7.92px;font-weight:normal;color:#33363a;-webkit-text-stroke:0.05px #33363a">Product1</div>
<div class="a t n" style="left:363.0px;top:468.39px;font-size:6.6px;line-height:7.92px;font-weight:normal;color:#33363a;-webkit-text-stroke:0.05px #33363a">open</div>
<div class="a t n" style="left:423.90000000000003px;top:468.39px;font-size:6.6px;line-height:7.92px;font-weight:normal;color:#33363a;-webkit-text-stroke:0.05px #33363a">PO001</div>
<div class="a t n" style="left:163.29999999999998px;top:481.89px;font-size:6.6px;line-height:7.92px;font-weight:normal;color:#33363a;-webkit-text-stroke:0.05px #33363a">Shipment2</div>
<div class="a t n" style="left:209.79999999999998px;top:481.89px;font-size:6.6px;line-height:7.92px;font-weight:normal;color:#33363a;-webkit-text-stroke:0.05px #33363a">Jul 27, 2022</div>
<div class="a t n" style="left:271.0px;top:481.89px;font-size:6.6px;line-height:7.92px;font-weight:normal;color:#33363a;-webkit-text-stroke:0.05px #33363a">POLine002</div>
<div class="a t n" style="left:319.0px;top:481.89px;font-size:6.6px;line-height:7.92px;font-weight:normal;color:#33363a;-webkit-text-stroke:0.05px #33363a">Product2</div>
<div class="a t n" style="left:363.0px;top:481.89px;font-size:6.6px;line-height:7.92px;font-weight:normal;color:#33363a;-webkit-text-stroke:0.05px #33363a">open</div>
<div class="a t n" style="left:423.90000000000003px;top:481.89px;font-size:6.6px;line-height:7.92px;font-weight:normal;color:#33363a;-webkit-text-stroke:0.05px #33363a">PO001</div>
<div class="a t n" style="left:163.29999999999998px;top:495.39px;font-size:6.6px;line-height:7.92px;font-weight:normal;color:#33363a;-webkit-text-stroke:0.05px #33363a">Shipment3</div>
<div class="a t n" style="left:209.79999999999998px;top:495.39px;font-size:6.6px;line-height:7.92px;font-weight:normal;color:#33363a;-webkit-text-stroke:0.05px #33363a">Jul 27, 2022</div>
<div class="a t n" style="left:271.0px;top:495.39px;font-size:6.6px;line-height:7.92px;font-weight:normal;color:#33363a;-webkit-text-stroke:0.05px #33363a">POLine003</div>
<div class="a t n" style="left:319.0px;top:495.39px;font-size:6.6px;line-height:7.92px;font-weight:normal;color:#33363a;-webkit-text-stroke:0.05px #33363a">Product3</div>
<div class="a t n" style="left:363.0px;top:495.39px;font-size:6.6px;line-height:7.92px;font-weight:normal;color:#33363a;-webkit-text-stroke:0.05px #33363a">open</div>
<div class="a t n" style="left:423.90000000000003px;top:495.39px;font-size:6.6px;line-height:7.92px;font-weight:normal;color:#33363a;-webkit-text-stroke:0.05px #33363a">PO001</div>
<div class="a t n" style="left:163.29999999999998px;top:508.89px;font-size:6.6px;line-height:7.92px;font-weight:normal;color:#33363a;-webkit-text-stroke:0.05px #33363a">Shipment4</div>
<div class="a t n" style="left:209.79999999999998px;top:508.89px;font-size:6.6px;line-height:7.92px;font-weight:normal;color:#33363a;-webkit-text-stroke:0.05px #33363a">Jul 27, 2022</div>
<div class="a t n" style="left:271.0px;top:508.89px;font-size:6.6px;line-height:7.92px;font-weight:normal;color:#33363a;-webkit-text-stroke:0.05px #33363a">POLine004</div>
<div class="a t n" style="left:319.0px;top:508.89px;font-size:6.6px;line-height:7.92px;font-weight:normal;color:#33363a;-webkit-text-stroke:0.05px #33363a">Product4</div>
<div class="a t n" style="left:363.0px;top:508.89px;font-size:6.6px;line-height:7.92px;font-weight:normal;color:#33363a;-webkit-text-stroke:0.05px #33363a">open</div>
<div class="a t n" style="left:423.90000000000003px;top:508.89px;font-size:6.6px;line-height:7.92px;font-weight:normal;color:#33363a;-webkit-text-stroke:0.05px #33363a">PO001</div>
<div class="a t n" style="left:163.29999999999998px;top:522.39px;font-size:6.6px;line-height:7.92px;font-weight:normal;color:#33363a;-webkit-text-stroke:0.05px #33363a">Shipment5</div>
<div class="a t n" style="left:209.79999999999998px;top:522.39px;font-size:6.6px;line-height:7.92px;font-weight:normal;color:#33363a;-webkit-text-stroke:0.05px #33363a">Jul 27, 2022</div>
<div class="a t n" style="left:271.0px;top:522.39px;font-size:6.6px;line-height:7.92px;font-weight:normal;color:#33363a;-webkit-text-stroke:0.05px #33363a">POLine005</div>
<div class="a t n" style="left:319.0px;top:522.39px;font-size:6.6px;line-height:7.92px;font-weight:normal;color:#33363a;-webkit-text-stroke:0.05px #33363a">Product5</div>
<div class="a t n" style="left:363.0px;top:522.39px;font-size:6.6px;line-height:7.92px;font-weight:normal;color:#33363a;-webkit-text-stroke:0.05px #33363a">open</div>
<div class="a t n" style="left:423.90000000000003px;top:522.39px;font-size:6.6px;line-height:7.92px;font-weight:normal;color:#33363a;-webkit-text-stroke:0.05px #33363a">PO001</div>
<div class="a t n" style="left:163.29999999999998px;top:535.89px;font-size:6.6px;line-height:7.92px;font-weight:normal;color:#33363a;-webkit-text-stroke:0.05px #33363a">Shipment6</div>
<div class="a t n" style="left:209.79999999999998px;top:535.89px;font-size:6.6px;line-height:7.92px;font-weight:normal;color:#33363a;-webkit-text-stroke:0.05px #33363a">Jul 27, 2022</div>
<div class="a t n" style="left:271.0px;top:535.89px;font-size:6.6px;line-height:7.92px;font-weight:normal;color:#33363a;-webkit-text-stroke:0.05px #33363a">POLine002</div>
<div class="a t n" style="left:319.0px;top:535.89px;font-size:6.6px;line-height:7.92px;font-weight:normal;color:#33363a;-webkit-text-stroke:0.05px #33363a">Product6</div>
<div class="a t n" style="left:363.0px;top:535.89px;font-size:6.6px;line-height:7.92px;font-weight:normal;color:#33363a;-webkit-text-stroke:0.05px #33363a">open</div>
<div class="a t n" style="left:423.90000000000003px;top:535.89px;font-size:6.6px;line-height:7.92px;font-weight:normal;color:#33363a;-webkit-text-stroke:0.05px #33363a">PO002</div>
<div class="a t n" style="left:163.29999999999998px;top:549.39px;font-size:6.6px;line-height:7.92px;font-weight:normal;color:#33363a;-webkit-text-stroke:0.05px #33363a">Shipment7</div>
<div class="a t n" style="left:209.79999999999998px;top:549.39px;font-size:6.6px;line-height:7.92px;font-weight:normal;color:#33363a;-webkit-text-stroke:0.05px #33363a">Jul 27, 2022</div>
<div class="a t n" style="left:271.0px;top:549.39px;font-size:6.6px;line-height:7.92px;font-weight:normal;color:#33363a;-webkit-text-stroke:0.05px #33363a">POLine002</div>
<div class="a t n" style="left:319.0px;top:549.39px;font-size:6.6px;line-height:7.92px;font-weight:normal;color:#33363a;-webkit-text-stroke:0.05px #33363a">Product7</div>
<div class="a t n" style="left:363.0px;top:549.39px;font-size:6.6px;line-height:7.92px;font-weight:normal;color:#33363a;-webkit-text-stroke:0.05px #33363a">open</div>
<div class="a t n" style="left:423.90000000000003px;top:549.39px;font-size:6.6px;line-height:7.92px;font-weight:normal;color:#33363a;-webkit-text-stroke:0.05px #33363a">PO002</div>
<div class="a t n" style="left:588.7px;top:436.48px;font-size:7.7px;line-height:9.24px;font-weight:normal;color:#33373c;-webkit-text-stroke:0.28px #33373c">Sum of Package_quantity and Sum of Units_shipped by Order_id</div>
<svg class="a" style="left:584px;top:427px;" width="436" height="226" viewBox="0 0 436 226"><g transform="translate(-584,-427)"><line x1="614" y1="581.7" x2="943" y2="581.7" stroke="#ececec" stroke-width="0.8"/><line x1="614" y1="551.7" x2="943" y2="551.7" stroke="#ececec" stroke-width="0.8"/><line x1="614" y1="521.7" x2="943" y2="521.7" stroke="#ececec" stroke-width="0.8"/><line x1="614" y1="491.70000000000005" x2="943" y2="491.70000000000005" stroke="#ececec" stroke-width="0.8"/><line x1="614" y1="461.70000000000005" x2="943" y2="461.70000000000005" stroke="#ececec" stroke-width="0.8"/><line x1="613.8" y1="611.7" x2="943" y2="611.7" stroke="#555" stroke-width="0.9"/><line x1="613.80" y1="609.2" x2="613.80" y2="611.7" stroke="#555" stroke-width="0.7"/><line x1="696.10" y1="609.2" x2="696.10" y2="611.7" stroke="#555" stroke-width="0.7"/><line x1="778.40" y1="609.2" x2="778.40" y2="611.7" stroke="#555" stroke-width="0.7"/><line x1="860.70" y1="609.2" x2="860.70" y2="611.7" stroke="#555" stroke-width="0.7"/><line x1="943.00" y1="609.2" x2="943.00" y2="611.7" stroke="#555" stroke-width="0.7"/><polyline points="613.80,601.70 696.10,461.70 778.40,581.70 860.70,571.70 943.00,561.70" fill="none" stroke="#a9d8e8" stroke-width="1.1"/><rect x="614" y="621.3" width="329" height="7.8" fill="#d8ebf6"/><rect x="614" y="621.8" width="1.6" height="7" rx="0.8" fill="#7c8a96"/><rect x="941.4" y="621.8" width="1.6" height="7" rx="0.8" fill="#7c8a96"/></g></svg>
<div class="a t n" style="left:600px;top:608.70px;font-size:5px;line-height:6.0px;font-weight:normal;color:#333;width:9.3px;text-align:right">0</div>
<div class="a t n" style="left:600px;top:578.70px;font-size:5px;line-height:6.0px;font-weight:normal;color:#333;width:9.3px;text-align:right">3</div>
<div class="a t n" style="left:600px;top:548.70px;font-size:5px;line-height:6.0px;font-weight:normal;color:#333;width:9.3px;text-align:right">6</div>
<div class="a t n" style="left:600px;top:518.70px;font-size:5px;line-height:6.0px;font-weight:normal;color:#333;width:9.3px;text-align:right">9</div>
<div class="a t n" style="left:600px;top:488.70px;font-size:5px;line-height:6.0px;font-weight:normal;color:#333;width:9.3px;text-align:right">12</div>
<div class="a t n" style="left:600px;top:458.70px;font-size:5px;line-height:6.0px;font-weight:normal;color:#333;width:9.3px;text-align:right">15</div>
<div class="a t n" style="left:593.8px;top:614.78px;font-size:5.2px;line-height:6.24px;font-weight:normal;color:#333;width:40px;text-align:center">POLine001</div>
<div class="a t n" style="left:676.0999999999999px;top:614.78px;font-size:5.2px;line-height:6.24px;font-weight:normal;color:#333;width:40px;text-align:center">POLine002</div>
<div class="a t n" style="left:758.4px;top:614.78px;font-size:5.2px;line-height:6.24px;font-weight:normal;color:#333;width:40px;text-align:center">POLine003</div>
<div class="a t n" style="left:840.6999999999999px;top:614.78px;font-size:5.2px;line-height:6.24px;font-weight:normal;color:#333;width:40px;text-align:center">POLine004</div>
<div class="a t n" style="left:923.0px;top:614.78px;font-size:5.2px;line-height:6.24px;font-weight:normal;color:#333;width:40px;text-align:center">POLine0</div>
<div class="a t n" style="left:955.9px;top:451.68px;font-size:7.2px;line-height:8.64px;font-weight:normal;color:#333;">Legend</div>
<div class="a" style="left:955.8px;top:472.8px;width:4.8px;height:4.8px;background:#b7e0ea;border-radius:50%"></div>
<div class="a t n" style="left:963.5px;top:471.15px;font-size:6.75px;line-height:8.1px;font-weight:normal;color:#777;">units_shipp...</div>
<div class="a" style="left:955.8px;top:486.6px;width:4.8px;height:4.8px;background:#2f4a66;border-radius:50%"></div>
<div class="a t n" style="left:963.5px;top:484.95px;font-size:6.75px;line-height:8.1px;font-weight:normal;color:#777;">package_q...</div>
<svg class="a" style="left:962.5px;top:643.5px;" width="6" height="6" viewBox="0 0 6 6"><rect width="6" height="6" fill="#111"/><path d="M0 4 L2 2 L3 3 L5 1 L6 1.5 L6 6 L0 6 Z" fill="#111"/><path d="M0.5 3.8 L2 2.2 L3 3.2 L5 1.2" stroke="#fff" stroke-width="0.7" fill="none"/></svg>
<div class="a t n" style="left:970.8px;top:644.42px;font-size:4.3px;line-height:5.16px;font-weight:normal;color:#333;">Powered by QuickSight</div>
</body></html>
